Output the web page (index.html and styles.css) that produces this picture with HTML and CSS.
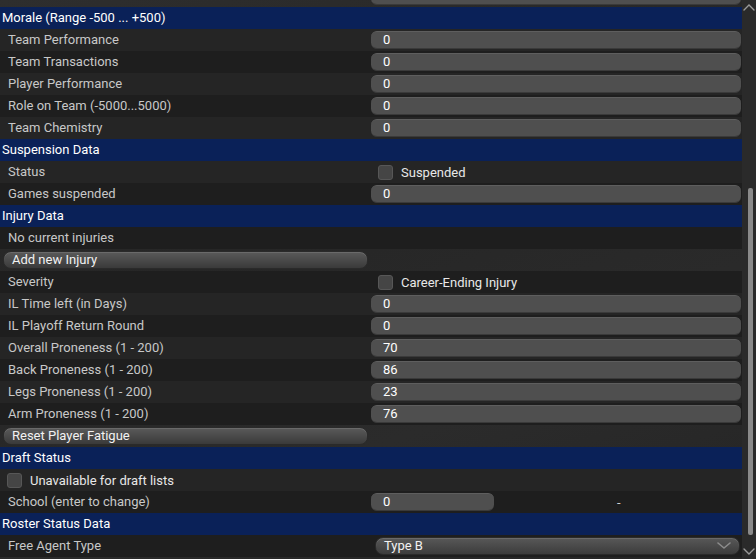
FILE: index.html
```html
<!DOCTYPE html>
<html>
<head>
<meta charset="utf-8">
<link rel="stylesheet" href="styles.css">
</head>
<body>
<div class="app">
  <div class="content">
    <div class="list">
      <div class="row stub"><div class="label"></div><div class="value"><div class="input"></div></div></div>

      <div class="header">Morale (Range -500 ... +500)</div>
      <div class="row light"><div class="label">Team Performance</div><div class="value"><div class="input">0</div></div></div>
      <div class="row dark"><div class="label">Team Transactions</div><div class="value"><div class="input">0</div></div></div>
      <div class="row light"><div class="label">Player Performance</div><div class="value"><div class="input">0</div></div></div>
      <div class="row dark"><div class="label">Role on Team (-5000...5000)</div><div class="value"><div class="input">0</div></div></div>
      <div class="row light"><div class="label">Team Chemistry</div><div class="value"><div class="input">0</div></div></div>

      <div class="header">Suspension Data</div>
      <div class="row light"><div class="label">Status</div><div class="value check-cell"><span class="checkbox"></span><span class="check-text">Suspended</span></div></div>
      <div class="row dark"><div class="label">Games suspended</div><div class="value"><div class="input">0</div></div></div>

      <div class="header">Injury Data</div>
      <div class="row dark"><div class="label">No current injuries</div><div class="value"></div></div>
      <div class="row btn-row"><div class="button">Add new Injury</div></div>
      <div class="row dark"><div class="label">Severity</div><div class="value check-cell"><span class="checkbox"></span><span class="check-text">Career-Ending Injury</span></div></div>
      <div class="row light"><div class="label">IL Time left (in Days)</div><div class="value"><div class="input">0</div></div></div>
      <div class="row dark"><div class="label">IL Playoff Return Round</div><div class="value"><div class="input">0</div></div></div>
      <div class="row light"><div class="label">Overall Proneness (1 - 200)</div><div class="value"><div class="input">70</div></div></div>
      <div class="row dark"><div class="label">Back Proneness (1 - 200)</div><div class="value"><div class="input">86</div></div></div>
      <div class="row light"><div class="label">Legs Proneness (1 - 200)</div><div class="value"><div class="input">23</div></div></div>
      <div class="row dark"><div class="label">Arm Proneness (1 - 200)</div><div class="value"><div class="input">76</div></div></div>
      <div class="row btn-row"><div class="button">Reset Player Fatigue</div></div>

      <div class="header">Draft Status</div>
      <div class="row light"><div class="full-check"><span class="checkbox"></span><span class="check-text">Unavailable for draft lists</span></div></div>
      <div class="row dark"><div class="label">School (enter to change)</div><div class="value school"><div class="input short">0</div><span class="dash">-</span></div></div>

      <div class="header">Roster Status Data</div>
      <div class="row dark"><div class="label">Free Agent Type</div><div class="value"><div class="select"><span>Type B</span><svg class="chev" width="14" height="8" viewBox="0 0 14 8"><path d="M1 1 L7 6 L13 1" fill="none" stroke="#8c8c8c" stroke-width="1.6" stroke-linecap="round" stroke-linejoin="round"/></svg></div></div></div>
    </div>
  </div>
  <div class="scrollbar">
    <svg class="arrow" width="12" height="8" viewBox="0 0 12 8"><path d="M1 7 L6 2 L11 7" fill="none" stroke="#9a9a9a" stroke-width="1.4" stroke-linecap="round"/></svg>
    <div class="track"><div class="thumb"></div></div>
    <svg class="arrow" width="12" height="8" viewBox="0 0 12 8"><path d="M1 1 L6 6 L11 1" fill="none" stroke="#9a9a9a" stroke-width="1.4" stroke-linecap="round"/></svg>
  </div>
</div>
</body>
</html>
```
FILE: styles.css
```css
html, body {
  margin: 0;
  padding: 0;
  width: 756px;
  height: 559px;
  overflow: hidden;
  background: #2a2a2a;
  font-family: Roboto, "Noto Sans", "Liberation Sans", sans-serif;
  font-size: 13px;
  color: #c8c8c8;
}

.app {
  display: flex;
  width: 756px;
  height: 559px;
  background: linear-gradient(160deg, #2e2e2e 0%, #262626 40%, #2b2b2b 70%, #242424 100%);
}

.content {
  width: 742px;
  height: 559px;
  overflow: hidden;
}

.list {
  display: flex;
  flex-direction: column;
  margin-top: -15px;
}

.header {
  height: 22px;
  line-height: 21px;
  background: #0a2158;
  color: #ffffff;
  padding-left: 2px;
  font-weight: 400;
}

.row {
  height: 22px;
  display: grid;
  grid-template-columns: 360px 1fr;
  line-height: 21px;
}

.row.light { background: #252525; }
.row.dark { background: #1e1e1e; }
.row.stub { background: transparent; }

.label {
  padding-left: 8px;
  white-space: nowrap;
}

.value {
  display: flex;
  align-items: center;
}

.input {
  margin-left: 11px;
  width: 370px;
  height: 18px;
  box-sizing: border-box;
  border-radius: 6px;
  background: #4f4f4f;
  border-top: 1px solid #5e5e5e;
  border-bottom: 1px solid #3a3a3a;
  color: #ffffff;
  padding-left: 12px;
  line-height: 16px;
}

.input.short { width: 123px; }

.school .dash {
  margin-left: 123px;
  color: #d0d0d0;
}

.check-cell { padding-left: 18px; }

.checkbox {
  display: inline-block;
  width: 15px;
  height: 15px;
  box-sizing: border-box;
  border-radius: 3px;
  background: #454545;
  border: 1px solid #575757;
}

.check-text {
  margin-left: 8px;
  color: #e8e8e8;
}

.full-check {
  grid-column: 1 / 3;
  display: flex;
  align-items: center;
  padding-left: 7px;
}

.btn-row {
  display: flex;
  align-items: center;
  padding-left: 3px;
}

.button {
  width: 365px;
  height: 18px;
  box-sizing: border-box;
  border-radius: 8px;
  background: linear-gradient(#5a5a5a, #3a3a3a);
  border: 1px solid #2a2a2a;
  box-shadow: inset 0 1px 0 #6a6a6a;
  color: #f2f2f2;
  padding-left: 8px;
  line-height: 16px;
}

.select {
  margin-left: 15px;
  width: 365px;
  height: 18px;
  box-sizing: border-box;
  border-radius: 8px;
  background: linear-gradient(#585858, #3c3c3c);
  border: 1px solid #2a2a2a;
  box-shadow: inset 0 1px 0 #6a6a6a;
  color: #f2f2f2;
  padding-left: 8px;
  padding-right: 8px;
  line-height: 16px;
  display: flex;
  align-items: center;
  justify-content: space-between;
}

.scrollbar {
  width: 14px;
  height: 559px;
  display: flex;
  flex-direction: column;
  align-items: center;
  background: #2a2a2a;
}

.scrollbar .arrow { margin: 3px 0; }

.track {
  flex: 1;
  width: 14px;
  position: relative;
}

.thumb {
  position: absolute;
  left: 6px;
  top: 174px;
  width: 5px;
  height: 347px;
  border-radius: 2px;
  background: #8a8a8a;
}
```
